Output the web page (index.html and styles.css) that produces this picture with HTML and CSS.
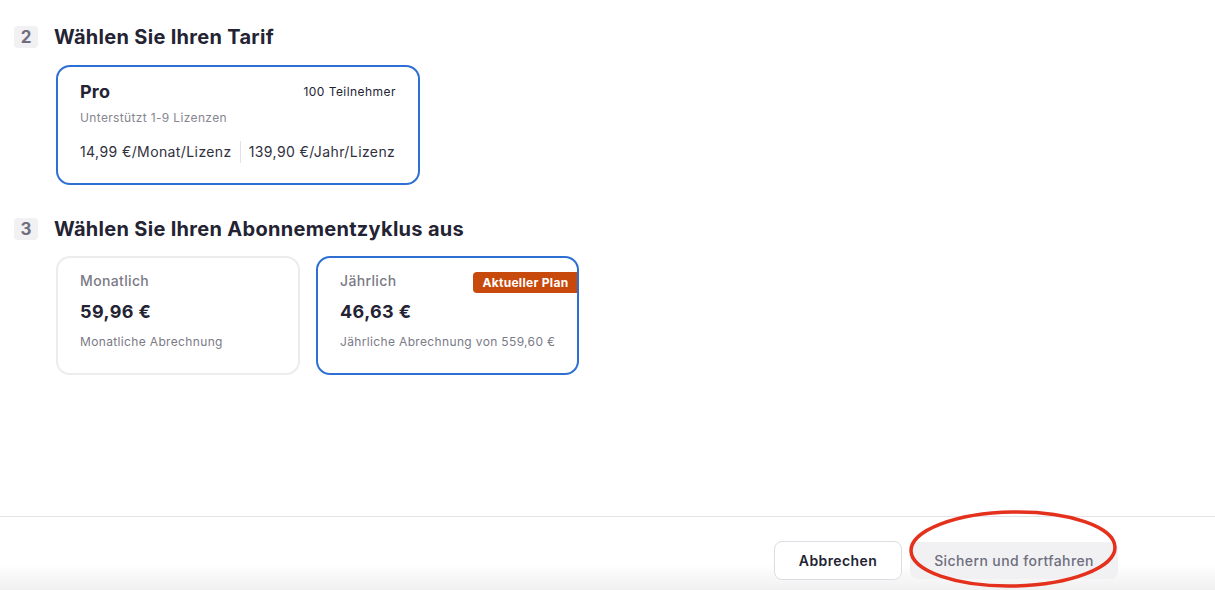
FILE: index.html
```html
<!DOCTYPE html>
<html lang="de">
<head>
    <meta charset="UTF-8">
    <meta name="viewport" content="width=device-width, initial-scale=1.0">
    <title>Tarif wählen</title>
    <link rel="stylesheet" href="styles.css">
</head>
<body>
    <main class="plan-page">
        <section class="step">
            <div class="step-head">
                <span class="step-num">2</span>
                <h2 class="step-title">Wählen Sie Ihren Tarif</h2>
            </div>
            <div class="plan-card selected">
                <div class="plan-top">
                    <span class="plan-name">Pro</span>
                    <span class="plan-seats">100 Teilnehmer</span>
                </div>
                <p class="plan-note">Unterstützt 1-9 Lizenzen</p>
                <div class="plan-prices">
                    <span>14,99 €/Monat/Lizenz</span>
                    <span class="price-sep"></span>
                    <span>139,90 €/Jahr/Lizenz</span>
                </div>
            </div>
        </section>

        <section class="step">
            <div class="step-head">
                <span class="step-num">3</span>
                <h2 class="step-title">Wählen Sie Ihren Abonnementzyklus aus</h2>
            </div>
            <div class="cycle-list">
                <div class="cycle-card">
                    <p class="cycle-name">Monatlich</p>
                    <p class="cycle-price">59,96 €</p>
                    <p class="cycle-note">Monatliche Abrechnung</p>
                </div>
                <div class="cycle-card selected">
                    <span class="current-badge">Aktueller Plan</span>
                    <p class="cycle-name">Jährlich</p>
                    <p class="cycle-price">46,63 €</p>
                    <p class="cycle-note">Jährliche Abrechnung von 559,60 €</p>
                </div>
            </div>
        </section>
    </main>

    <footer class="page-footer">
        <button class="btn btn-cancel" type="button">Abbrechen</button>
        <span class="btn-wrap">
            <button class="btn btn-save" type="button" disabled>Sichern und fortfahren</button>
            <svg class="mark" width="214" height="82" viewBox="0 0 214 82">
                <ellipse cx="107" cy="40" rx="102" ry="37" fill="none" stroke="#e4311d" stroke-width="3.5" transform="rotate(-1 107 40)"/>
            </svg>
        </span>
    </footer>
</body>
</html>
```

FILE: styles.css
```css
* {
    margin: 0;
    padding: 0;
    box-sizing: border-box;
}

html, body {
    height: 100%;
}

body {
    font-family: Inter, "Noto Sans", "Liberation Sans", sans-serif;
    color: #232333;
    background: #fff;
    letter-spacing: 0.35px;
    display: flex;
    flex-direction: column;
    overflow: hidden;
}

.plan-page {
    flex: 1;
    padding: 26px 0 0 14px;
}

.step + .step {
    margin-top: 33px;
}

.step-head {
    display: flex;
    align-items: center;
    gap: 16px;
    height: 22px;
}

.step-num {
    width: 24px;
    height: 22px;
    border-radius: 4px;
    background: #f1f1f4;
    color: #6e6e7e;
    font-size: 17px;
    font-weight: 700;
    letter-spacing: 0;
    display: flex;
    align-items: center;
    justify-content: center;
}

.step-title {
    font-size: 20px;
    font-weight: 700;
    color: #232333;
    letter-spacing: 0.3px;
}

/* tarif */
.plan-card {
    margin: 17px 0 0 42px;
    width: 364px;
    border: 2px solid #e9e9ee;
    border-radius: 14px;
    padding: 13px 22px 20px;
}

.plan-card.selected,
.cycle-card.selected {
    border-color: #2d6fd2;
}

.plan-top {
    display: flex;
    justify-content: space-between;
    align-items: center;
    height: 22px;
}

.plan-name {
    font-size: 18px;
    font-weight: 700;
    letter-spacing: 0.2px;
}

.plan-seats {
    font-size: 12px;
    color: #232333;
    letter-spacing: 0.45px;
}

.plan-note {
    margin-top: 8px;
    font-size: 12px;
    line-height: 16px;
    color: #86868f;
    letter-spacing: 0.35px;
}

.plan-prices {
    margin-top: 15px;
    display: flex;
    align-items: center;
    gap: 8px;
    white-space: nowrap;
    font-size: 14px;
    line-height: 20px;
    color: #303040;
    letter-spacing: 0.4px;
}

.plan-prices span {
    flex: none;
}

.price-sep {
    width: 1px;
    height: 22px;
    background: #e1e1e6;
}

/* zyklus */
.cycle-list {
    margin: 16px 0 0 42px;
    display: flex;
    gap: 16px;
    align-items: flex-start;
}

.cycle-card {
    position: relative;
    min-width: 244px;
    white-space: nowrap;
    border: 2px solid #ececef;
    border-radius: 14px;
    padding: 13px 22px 23px;
}

.cycle-name {
    font-size: 14px;
    line-height: 20px;
    font-weight: 500;
    color: #7a7a86;
}

.cycle-price {
    margin-top: 9px;
    font-size: 18px;
    line-height: 24px;
    font-weight: 700;
    color: #232333;
    letter-spacing: 0.4px;
}

.cycle-note {
    margin-top: 10px;
    font-size: 12px;
    line-height: 16px;
    color: #7a7a86;
}

.current-badge {
    position: absolute;
    top: 14px;
    right: 0;
    height: 21px;
    padding: 0 9px;
    background: #c8490c;
    color: #fff;
    font-size: 12px;
    font-weight: 700;
    line-height: 21px;
    letter-spacing: 0.3px;
    border-radius: 4px 0 0 4px;
}

/* footer */
.page-footer {
    height: 74px;
    border-top: 1px solid #e3e3e8;
    display: flex;
    justify-content: flex-end;
    align-items: flex-start;
    gap: 8px;
    padding: 24px 97px 0 0;
    background: linear-gradient(to bottom, #fff 64%, #f0f0f0 100%);
}

.btn {
    font-family: inherit;
    font-size: 14px;
    letter-spacing: 0.4px;
    border-radius: 8px;
    height: 39px;
    cursor: pointer;
}

.btn-cancel {
    width: 128px;
    background: #fff;
    border: 1px solid #dcdce2;
    color: #232333;
    font-weight: 600;
}

.btn-wrap {
    position: relative;
    display: block;
    margin-top: 1px;
}

.btn-save {
    width: 208px;
    height: 37px;
    border: none;
    background: #f1f1f3;
    color: #6e6e7e;
    font-weight: 500;
    cursor: not-allowed;
}

.mark {
    position: absolute;
    left: -4px;
    top: -33px;
    pointer-events: none;
}
```
